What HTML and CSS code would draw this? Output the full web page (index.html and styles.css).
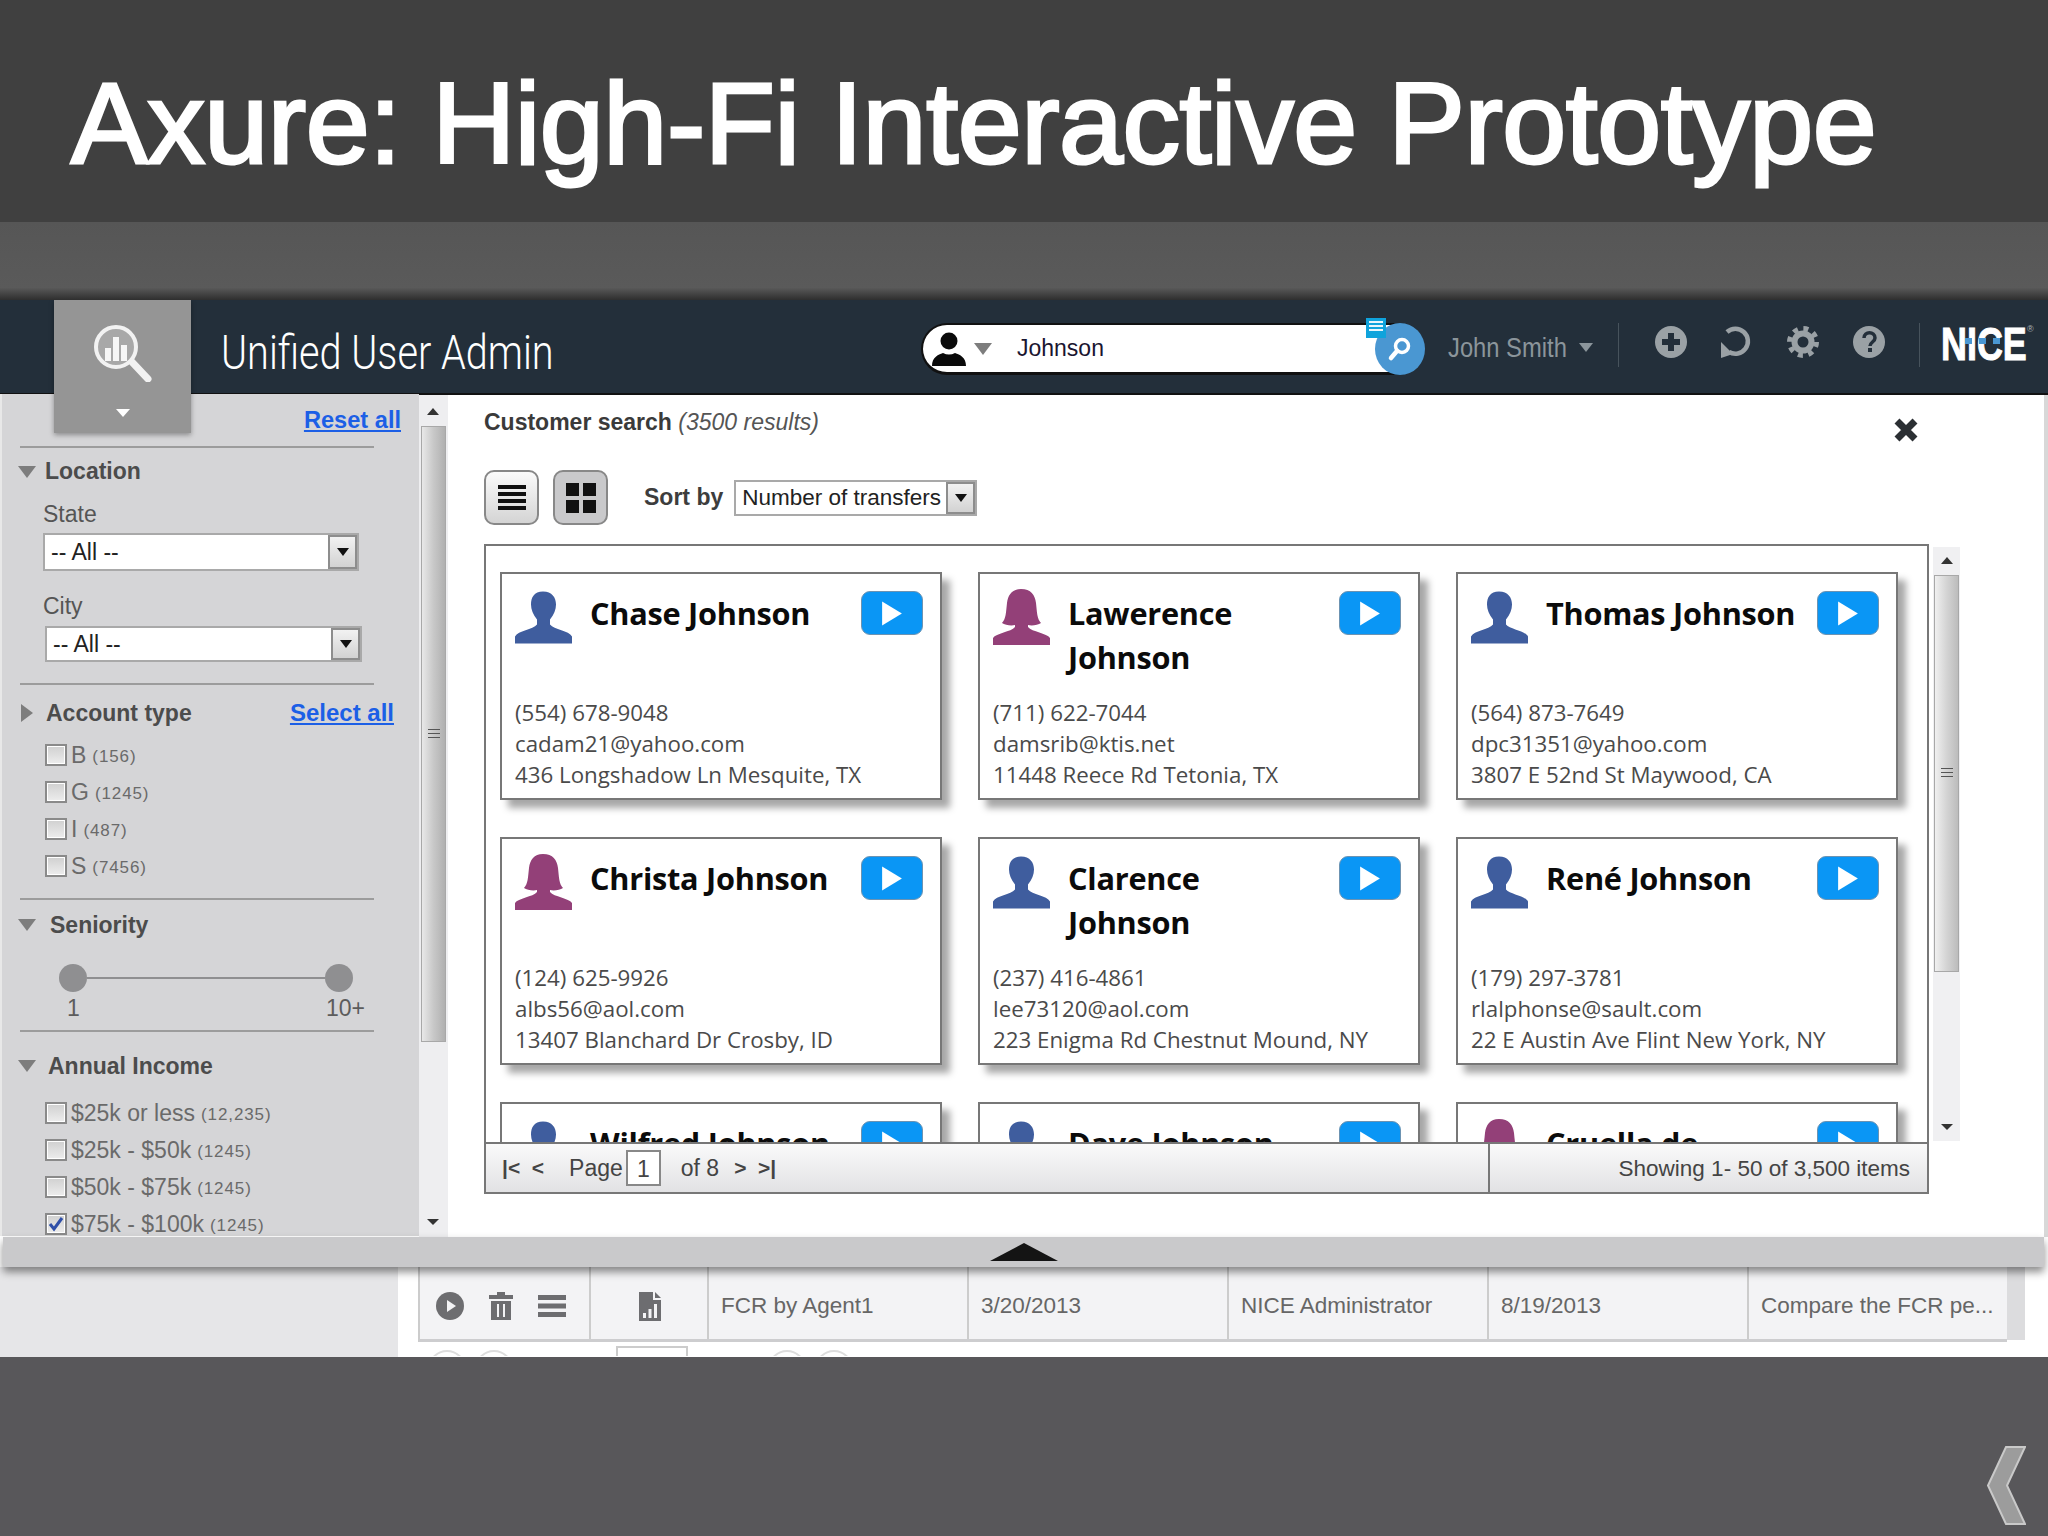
FILE: index.html
```html
<!DOCTYPE html>
<html lang="en">
<head>
<meta charset="utf-8">
<title>Axure: High-Fi Interactive Prototype</title>
<link rel="stylesheet" href="styles.css">
</head>
<body>
<svg class="defs" width="0" height="0" aria-hidden="true">
  <symbol id="male" viewBox="0 0 57 52"><path d="M28 0c-9 0-12 6-12 13 0 5 2 10 6 15v5c-4 5-19 6-22 12v7h57v-7c-3-6-18-7-22-12v-5c4-5 6-10 6-15 0-7-4-13-13-13z"/></symbol>
  <symbol id="female" viewBox="0 0 57 56"><path d="M28 0c-9 0-13 6-14 14-1 9-1 16-5 20 3 2 9 3 13 2v2c-4 5-19 6-22 11v7h57v-7c-3-5-18-6-22-11v-2c4 1 10 0 13-2-4-4-4-11-5-20-1-8-5-14-15-14z"/></symbol>
  <symbol id="play" viewBox="0 0 20 24"><path d="M1 1l18 11L1 23z"/></symbol>
</svg>
<div class="slide">
  <header class="title-band"><h1 class="title">Axure: High-Fi Interactive Prototype</h1></header>
  <div class="sub-band"></div>
  <div class="app">
    <div class="app-tab">
      <svg class="tab-icon" viewBox="0 0 58 58" width="58" height="58">
        <path d="M38 38l16 17" stroke="#f2f2f2" stroke-width="7" stroke-linecap="round"/>
        <circle cx="22" cy="23" r="20" fill="#a8a8a8" stroke="#f2f2f2" stroke-width="4"/>
        <path d="M11 24h6v13h-6zM19 13h6v24h-6zM27 21h6v16h-6z" fill="#f6f6f6"/>
      </svg>
      <span class="tab-caret"></span>
    </div>
    <div class="app-header">
      <div class="app-name">Unified User Admin</div>
      <div class="search">
        <svg class="search-person" viewBox="0 0 34 34"><circle cx="17" cy="9" r="8.5"/><path d="M0 34c0-9 6-11 11-13 4 2 8 2 12 0 5 2 11 4 11 13z"/></svg>
        <span class="tri tri-down tri-search"></span>
        <span class="search-text">Johnson</span>
        <span class="search-go">
          <svg viewBox="0 0 26 26" width="26" height="26"><circle cx="15" cy="10" r="6.5" fill="none" stroke="#fff" stroke-width="3.5"/><path d="M10 15l-6 7" stroke="#fff" stroke-width="4.5" stroke-linecap="round"/></svg>
        </span>
        <span class="note"><i></i><i></i><i></i></span>
      </div>
      <div class="user">John Smith</div>
      <span class="tri tri-down tri-user"></span>
      <span class="hdr-sep hdr-sep-a"></span>
      <div class="hdr-icons">
        <svg viewBox="0 0 32 32" width="32" height="32"><circle cx="16" cy="16" r="16" fill="#9aa1a5"/><path d="M13 7h6v6h6v6h-6v6h-6v-6H7v-6h6z" fill="#232f3a"/></svg>
        <svg viewBox="0 0 32 32" width="32" height="32"><path d="M6 6A12.5 12.5 0 1 1 8 26" fill="none" stroke="#9aa1a5" stroke-width="4.5"/><path d="M0 16l12 12-12 4z" fill="#9aa1a5"/></svg>
        <svg viewBox="0 0 32 32" width="32" height="32"><circle cx="16" cy="16" r="13.5" fill="none" stroke="#9aa1a5" stroke-width="5" stroke-dasharray="5 5.6"/><circle cx="16" cy="16" r="8.5" fill="none" stroke="#9aa1a5" stroke-width="6"/></svg>
        <svg viewBox="0 0 32 32" width="32" height="32"><circle cx="16" cy="16" r="16" fill="#9aa1a5"/><path d="M11 12c0-7 11-7 11 0 0 4-5 4-5 8" fill="none" stroke="#232f3a" stroke-width="3.5"/><rect x="15" y="22" width="4" height="4" fill="#232f3a"/></svg>
      </div>
      <span class="hdr-sep hdr-sep-b"></span>
      <div class="nice"><span class="nice-word">NICE</span><span class="nice-dots"><i></i><i></i><i></i></span><span class="nice-tm">®</span></div>
    </div>

    <div class="app-body">
      <aside class="sidebar">
        <div class="side-top"><a class="link" href="#">Reset all</a></div>
        <div class="divider"></div>
        <div class="head head-location"><span class="tri tri-down tri-head"></span><span class="head-label">Location</span></div>
        <div class="field-label">State</div>
        <div class="select select-state"><span class="select-text">-- All --</span><span class="select-btn"><span class="tri-mini"></span></span></div>
        <div class="field-label field-city">City</div>
        <div class="select select-city"><span class="select-text">-- All --</span><span class="select-btn"><span class="tri-mini"></span></span></div>
        <div class="divider divider-city"></div>
        <div class="head head-account"><span class="tri tri-right"></span><span class="head-label">Account type</span><a class="link link-select" href="#">Select all</a></div>
        <div class="checks checks-account">
          <div class="check"><span class="box"></span><span class="lbl">B</span><span class="cnt">(156)</span></div>
          <div class="check"><span class="box"></span><span class="lbl">G</span><span class="cnt">(1245)</span></div>
          <div class="check"><span class="box"></span><span class="lbl">I</span><span class="cnt">(487)</span></div>
          <div class="check"><span class="box"></span><span class="lbl">S</span><span class="cnt">(7456)</span></div>
        </div>
        <div class="divider divider-account"></div>
        <div class="head head-seniority"><span class="tri tri-down tri-head"></span><span class="head-label">Seniority</span></div>
        <div class="slider"><span class="knob"></span><span class="track"></span><span class="knob"></span></div>
        <div class="slider-labels"><span>1</span><span>10+</span></div>
        <div class="divider divider-slider"></div>
        <div class="head head-income"><span class="tri tri-down tri-head"></span><span class="head-label">Annual Income</span></div>
        <div class="checks">
          <div class="check"><span class="box"></span><span class="lbl">$25k or less</span><span class="cnt">(12,235)</span></div>
          <div class="check"><span class="box"></span><span class="lbl">$25k - $50k</span><span class="cnt">(1245)</span></div>
          <div class="check"><span class="box"></span><span class="lbl">$50k - $75k</span><span class="cnt">(1245)</span></div>
          <div class="check"><span class="box"><svg viewBox="0 0 18 18" width="18" height="18"><path d="M3 9l4 5 8-11" fill="none" stroke="#2f4fa8" stroke-width="3"/></svg></span><span class="lbl">$75k - $100k</span><span class="cnt">(1245)</span></div>
        </div>
      </aside>
      <div class="side-scroll">
        <span class="arrow-up arrow-side-up"></span>
        <span class="side-thumb"><span class="grip"></span></span>
        <span class="arrow-down arrow-side"></span>
      </div>

      <main class="main">
        <div class="main-head"><b>Customer search</b> <em>(3500 results)</em></div>
        <svg class="close" viewBox="0 0 26 26" width="26" height="26"><path d="M4 4l18 18M22 4L4 22" stroke="#2b2f33" stroke-width="7"/></svg>
        <div class="toolbar">
          <span class="toggle"><span class="bars"><i></i><i></i><i></i><i></i></span></span>
          <span class="toggle toggle-on"><span class="squares"><i></i><i></i><i></i><i></i></span></span>
          <b class="sort-label">Sort by</b>
          <div class="select select-sort"><span class="select-text">Number of transfers</span><span class="select-btn"><span class="tri-mini"></span></span></div>
        </div>
        <div class="results-row">
          <section class="results">
            <div class="cards">
              <article class="card"><div class="card-top"><svg class="avatar male"><use href="#male"/></svg><h2 class="name">Chase Johnson</h2><span class="go"><svg><use href="#play"/></svg></span></div><div class="info">(554) 678-9048<br>cadam21@yahoo.com<br>436 Longshadow Ln Mesquite, TX</div></article>
              <article class="card"><div class="card-top"><svg class="avatar female"><use href="#female"/></svg><h2 class="name">Lawerence<br>Johnson</h2><span class="go"><svg><use href="#play"/></svg></span></div><div class="info">(711) 622-7044<br>damsrib@ktis.net<br>11448 Reece Rd Tetonia, TX</div></article>
              <article class="card"><div class="card-top"><svg class="avatar male"><use href="#male"/></svg><h2 class="name">Thomas Johnson</h2><span class="go"><svg><use href="#play"/></svg></span></div><div class="info">(564) 873-7649<br>dpc31351@yahoo.com<br>3807 E 52nd St Maywood, CA</div></article>
              <article class="card"><div class="card-top"><svg class="avatar female"><use href="#female"/></svg><h2 class="name">Christa Johnson</h2><span class="go"><svg><use href="#play"/></svg></span></div><div class="info">(124) 625-9926<br>albs56@aol.com<br>13407 Blanchard Dr Crosby, ID</div></article>
              <article class="card"><div class="card-top"><svg class="avatar male"><use href="#male"/></svg><h2 class="name">Clarence<br>Johnson</h2><span class="go"><svg><use href="#play"/></svg></span></div><div class="info">(237) 416-4861<br>lee73120@aol.com<br>223 Enigma Rd Chestnut Mound, NY</div></article>
              <article class="card"><div class="card-top"><svg class="avatar male"><use href="#male"/></svg><h2 class="name">René Johnson</h2><span class="go"><svg><use href="#play"/></svg></span></div><div class="info">(179) 297-3781<br>rlalphonse@sault.com<br>22 E Austin Ave Flint New York, NY</div></article>
              <article class="card"><div class="card-top"><svg class="avatar male"><use href="#male"/></svg><h2 class="name">Wilfred Johnson</h2><span class="go"><svg><use href="#play"/></svg></span></div></article>
              <article class="card"><div class="card-top"><svg class="avatar male"><use href="#male"/></svg><h2 class="name">Dave Johnson</h2><span class="go"><svg><use href="#play"/></svg></span></div></article>
              <article class="card"><div class="card-top"><svg class="avatar female"><use href="#female"/></svg><h2 class="name">Cruella de</h2><span class="go"><svg><use href="#play"/></svg></span></div></article>
            </div>
            <footer class="pager">
              <div class="pager-left"><span class="pg-nav">|&lt;&nbsp; &lt;</span><span class="pg-page">Page</span><span class="pg-input">1</span><span class="pg-of">of 8</span><span class="pg-nav">&gt;&nbsp; &gt;|</span></div>
              <div class="pager-right">Showing 1- 50 of 3,500 items</div>
            </footer>
          </section>
          <div class="result-scroll">
            <span class="arrow-up"></span>
            <span class="result-thumb"><span class="grip"></span></span>
            <span class="arrow-down"></span>
          </div>
        </div>
      </main>
    </div>

    <div class="handle"><span class="handle-tri"></span></div>

    <div class="lower">
      <div class="lower-side"></div>
      <div class="lower-table">
        <div class="t-row">
          <div class="t-cell t-actions">
            <svg viewBox="0 0 28 28" width="28" height="28"><circle cx="14" cy="14" r="14" fill="#6d6d70"/><path d="M11 8l9 6-9 6z" fill="#f3f3f5"/></svg>
            <svg viewBox="0 0 24 28" width="24" height="28"><path d="M8 0h8v3h8v4H0V3h8zM2 9h20v19H2z" fill="#6d6d70"/><path d="M8 12h2v13H8zM14 12h2v13h-2z" fill="#f3f3f5"/></svg>
            <svg viewBox="0 0 28 24" width="28" height="24"><path d="M0 1h28v5H0zM0 9.5h28v5H0zM0 18h28v5H0z" fill="#6d6d70"/></svg>
          </div>
          <div class="t-cell t-doc"><svg viewBox="0 0 22 29" width="22" height="29"><path d="M0 0h14v8h8v21H0z" fill="#6d6d70"/><path d="M16 0l6 6h-6z" fill="#6d6d70"/><path d="M4 21h3v5H4zM9.5 17h3v9h-3zM15 12h3v14h-3z" fill="#f3f3f5"/></svg></div>
          <div class="t-cell t-a">FCR by Agent1</div>
          <div class="t-cell t-a">3/20/2013</div>
          <div class="t-cell t-a">NICE Administrator</div>
          <div class="t-cell t-a">8/19/2013</div>
          <div class="t-cell t-last">Compare the FCR pe...</div>
        </div>
        <div class="t-pager"><span class="circ"></span><span class="circ"></span><span class="pg-box"></span><span class="circ circ-far"></span><span class="circ"></span></div>
      </div>
      <div class="lower-scroll"></div>
    </div>
  </div>
  <svg class="chevron" viewBox="0 0 39 79" width="39" height="79"><path d="M38 1H19L1 39.5 19 78h19L20 39.5z" fill="#9c9c9c" stroke="#c9c9c9" stroke-width="2"/></svg>
</div>
</body>
</html>
```

FILE: styles.css
```css
* { box-sizing: border-box; }
html, body { margin: 0; padding: 0; }
body { font-family: "Liberation Sans", Arial, sans-serif; background: #58575a; }
.defs { position: absolute; }
.slide { position: relative; width: 2048px; height: 1536px; overflow: hidden; background: #58575a; display: flex; flex-direction: column; }

.title-band { height: 222px; background: #404040; padding-left: 71px; }
.title { margin: 0; padding-top: 56px; font-size: 115px; line-height: 134px; font-weight: 400; color: #fff; -webkit-text-stroke: 3px #fff; letter-spacing: -.45px; white-space: nowrap; }
.sub-band { height: 78px; background: linear-gradient(#565656 0, #5a5a5a 84%, #2e2e2e 100%); }

.app { position: relative; height: 1057px; overflow: hidden; display: flex; flex-direction: column; background: #fff; }

.app-tab { position: absolute; z-index: 3; left: 54px; top: 0; width: 137px; height: 133px; background: #959595; box-shadow: 0 2px 5px rgba(0,0,0,.35); display: flex; flex-direction: column; align-items: center; padding-top: 24px; }
.tab-icon { margin-left: 1px; }
.tab-caret { width: 0; height: 0; margin-top: 27px; border-style: solid; border-width: 8px 7px 0; border-color: #fff transparent transparent; }

.app-header { height: 95px; flex: none; background: #232f3a; border-bottom: 2px solid #111; display: flex; align-items: center; padding: 0 0 2px 221px; }
.app-name { width: 700px; margin-top: 13px; font-family: Roboto, sans-serif; font-weight: 300; font-size: 48px; color: #fff; transform: scaleX(.826); transform-origin: left center; white-space: nowrap; }

.search { position: relative; width: 503px; height: 52px; flex: none; background: #fff; border: 2px solid #111; border-bottom-width: 3px; border-radius: 26px; display: flex; align-items: center; padding-left: 9px; margin-top: 7px; }
.search-person { width: 34px; height: 34px; fill: #0a0a0a; }
.tri { display: inline-block; width: 0; height: 0; border-style: solid; }
.tri-down { border-width: 12px 9px 0; border-color: #7d7d7d transparent transparent; }
.tri-search { margin-left: 8px; }
.search-text { margin-left: 25px; font-size: 23px; color: #1a1530; }
.search-go { position: absolute; right: -3px; top: -2px; width: 50px; height: 52px; border-radius: 50%; background: #4a97d2; display: flex; align-items: center; justify-content: center; }
.note { position: absolute; z-index: 2; right: 36px; top: -7px; width: 20px; height: 20px; background: #0fa3dc; display: flex; flex-direction: column; gap: 2px; padding: 3px 3px; }
.note i { display: block; height: 2px; background: #e8f6fc; }

.user { width: 131px; margin-left: 24px; font-size: 27px; color: #8b959b; margin-top: 6px; white-space: nowrap; transform: scaleX(.88); transform-origin: left center; flex: none; }
.tri-user { border-width: 9px 7px 0; border-color: #8b959b transparent transparent; margin-top: 4px; }
.hdr-sep { width: 1px; height: 44px; background: #47535c; flex: none; margin-top: -1px; }
.hdr-sep-a { margin-left: 25px; }
.hdr-icons { display: flex; gap: 34px; margin-left: 36px; margin-top: -8px; }
.hdr-sep-b { margin-left: 34px; }
.nice { position: relative; margin-left: 21px; margin-top: -3px; height: 40px; width: 92px; flex: none; }
.nice-word { display: block; font-size: 46px; line-height: 40px; font-weight: 700; color: #fff; -webkit-text-stroke: 1px #fff; transform: scaleX(.78); transform-origin: left center; }
.nice-dots { position: absolute; left: 24px; top: 14px; display: flex; gap: 7px; }
.nice-dots i { width: 7px; height: 6px; background: #4a97d2; }
.nice-tm { position: absolute; left: 86px; top: 0; font-size: 9px; color: #aeb4b8; }

.app-body { height: 842px; flex: none; display: flex; }
.sidebar { width: 419px; flex: none; height: 842px; overflow: hidden; background: #d5d5d7; color: #484848; border-left: 2px solid #e8e8e8; margin-top: -1px; padding-top: 1px; }
.side-top { height: 51px; display: flex; align-items: center; justify-content: flex-end; padding-right: 18px; }
.link { color: #1c5fe6; font-size: 23.6px; font-weight: 700; text-decoration: underline; }
.divider { width: 354px; height: 2px; margin-left: 18px; background: #9c9c9c; }
.divider-city { margin-top: 21px; }
.divider-account { margin-top: 21px; }
.divider-slider { margin-top: 10px; }

.head { display: flex; align-items: center; padding-left: 16px; font-size: 23px; font-weight: 700; color: #4c4c4c; }
.head-location { height: 47px; }
.head-account { height: 57px; padding-left: 19px; padding-right: 25px; padding-bottom: 1px; }
.head-seniority { height: 48px; padding-top: 2px; }
.head-income { height: 69px; padding-bottom: 1px; }
.tri-head { margin-right: 9px; }
.tri-right { border-width: 9px 0 9px 12px; border-color: transparent transparent transparent #7d7d7d; margin-right: 13px; }
.head-seniority .tri-head { margin-right: 14px; }
.head-income .tri-head { margin-right: 12px; }
.link-select { margin-left: auto; font-size: 24px; }

.field-label { height: 38px; line-height: 38px; padding-left: 41px; font-size: 23px; color: #555; }
.field-city { height: 55px; line-height: 39px; padding-top: 16px; }
.select { display: flex; background: #fff; border: 2px solid #a9a9a9; overflow: hidden; }
.select-text { flex: 1; min-width: 0; overflow: hidden; white-space: nowrap; font-size: 23px; padding-left: 6px; color: #222; align-self: center; }
.select-btn { width: 29px; flex: none; display: flex; align-items: center; justify-content: center; background: linear-gradient(#f2f2f2, #d2d2d2); border: 2px solid #8d8d8d; }
.tri-mini { width: 0; height: 0; border-style: solid; border-width: 8px 6px 0; border-color: #111 transparent transparent; }
.select-state { width: 316px; height: 38px; margin-left: 41px; }
.select-city { width: 317px; height: 36px; margin-left: 43px; }
.select-sort { width: 243px; height: 36px; margin-left: 11px; }
.select-sort .select-text { font-size: 22.5px; }

.checks { display: flex; flex-direction: column; gap: 15px; margin-left: 43px; margin-top: 1px; }
.checks-account { margin-top: 2px; }
.check { height: 22px; display: flex; align-items: center; white-space: nowrap; color: #6a6a6a; }
.box { width: 22px; height: 22px; flex: none; display: flex; align-items: center; justify-content: center; border: 2px solid #8a8a8a; background: linear-gradient(#d0d0d0, #ededed); box-shadow: inset 0 0 0 1px #fff; }
.lbl { margin-left: 4px; font-size: 23px; }
.cnt { margin-left: 6px; font-size: 17px; letter-spacing: .9px; margin-top: 3px; }

.slider { height: 48px; display: flex; align-items: center; padding: 11px 0 0 57px; }
.knob { width: 28px; height: 28px; flex: none; border-radius: 50%; background: #8f8f91; }
.track { width: 238px; height: 2px; background: #8f8f91; }
.slider-labels { width: 298px; height: 24px; margin-left: 65px; display: flex; justify-content: space-between; font-size: 23px; line-height: 24px; color: #5c5c5c; }

.side-scroll { position: relative; width: 29px; flex: none; background: #eeeef0; }
.arrow-up, .arrow-down { position: absolute; left: 8px; width: 0; height: 0; border-style: solid; }
.arrow-up { top: 10px; border-width: 0 6px 7px; border-color: transparent transparent #333; }
.arrow-side-up { top: 13px; }
.arrow-down { bottom: 11px; border-width: 6px 6px 0; border-color: #333 transparent transparent; }
.arrow-side { bottom: 12px; }
.side-thumb { position: absolute; left: 2px; top: 31px; width: 25px; height: 616px; display: flex; align-items: center; justify-content: center; background: linear-gradient(90deg, #e8e8e8, #c8c8c8 50%, #b0b0b0); border: 1px solid #a8a8a8; }
.grip { display: block; width: 12px; height: 11px; background: repeating-linear-gradient(#555 0 1px, transparent 1px 4px); }

.main { position: relative; flex: 1; min-width: 0; padding-left: 36px; border-right: 4px solid #d8d8d8; background: #fff; }
.main-head { height: 56px; line-height: 54px; font-size: 23px; color: #3a3a3a; white-space: nowrap; }
.main-head em { color: #555; }
.close { position: absolute; left: 1445px; top: 22px; }
.toolbar { margin-top: 19px; height: 55px; display: flex; align-items: center; }
.toggle { width: 55px; height: 55px; display: flex; align-items: center; justify-content: center; border: 2px solid #888; border-radius: 10px; background: linear-gradient(#fbfbfb, #d4d4d4); margin-right: 14px; }
.toggle-on { background: #c9c9cb; margin-right: 36px; }
.bars { width: 28px; display: flex; flex-direction: column; gap: 3px; }
.bars i { height: 4px; background: #111; }
.squares { width: 30px; display: grid; grid-template-columns: 13px 13px; gap: 4px; }
.squares i { height: 13px; background: #111; }
.sort-label { font-size: 23px; color: #3d3d3d; white-space: nowrap; }

.results-row { margin-top: 19px; display: flex; gap: 4px; align-items: flex-start; }
.results { width: 1445px; height: 650px; flex: none; border: 2px solid #777; display: flex; flex-direction: column; }
.cards { height: 596px; flex: none; overflow: hidden; padding: 26px 0 0 14px; display: grid; grid-template-columns: repeat(3, 442px); grid-auto-rows: 228px; column-gap: 36px; row-gap: 37px; }
.card { display: flex; flex-direction: column; height: 228px; padding: 17px 17px 8px 13px; background: #fff; border: 2px solid #777; box-shadow: 8px 8px 7px rgba(0,0,0,.35); }
.card-top { display: flex; align-items: flex-start; }
.avatar { width: 57px; height: 53px; flex: none; }
.male { fill: #3f5d9e; }
.female { fill: #934078; height: 56px; margin-top: -2px; }
.name { flex: 1; min-width: 0; margin: 0 0 0 18px; font-family: "Open Sans", sans-serif; font-weight: 700; font-size: 30.7px; line-height: 44px; color: #0b0b0b; letter-spacing: -.25px; white-space: nowrap; }
.go { width: 62px; height: 44px; flex: none; display: flex; align-items: center; justify-content: center; background: #0a96f5; border: 1px solid #6c93b2; border-radius: 9px; fill: #fff; }
.go svg { width: 22px; height: 27px; }
.info { margin-top: auto; font-family: "Open Sans", sans-serif; font-size: 22.3px; line-height: 31px; color: #4a4a4a; white-space: nowrap; }

.pager { height: 50px; flex: none; display: flex; background: linear-gradient(#fafafa, #e2e2e4); border-top: 2px solid #777; font-size: 23px; color: #444; }
.pager-left { width: 1004px; display: flex; align-items: center; padding-left: 16px; border-right: 2px solid #777; white-space: nowrap; }
.pg-nav { font-weight: 700; font-size: 21px; }
.pg-page { margin-left: 25px; }
.pg-input { width: 35px; height: 36px; margin-left: 3px; border: 2px solid #888; background: #fff; text-align: center; line-height: 34px; }
.pg-of { margin: 0 15px 0 20px; }
.pager-right { flex: 1; text-align: right; padding-right: 17px; line-height: 50px; font-size: 22.5px; white-space: nowrap; }

.result-scroll { position: relative; width: 27px; height: 594px; margin-top: 3px; flex: none; background: #f0f0f2; }
.result-thumb { position: absolute; left: 1px; top: 28px; width: 25px; height: 397px; display: flex; align-items: center; justify-content: center; background: linear-gradient(90deg, #f0f0f0, #d4d4d4 50%, #bcbcbc); border: 1px solid #a8a8a8; }

.handle { position: relative; z-index: 2; height: 30px; flex: none; margin: 0 4px 0 3px; display: flex; justify-content: center; align-items: center; background: #c9c9cb; box-shadow: 0 5px 8px rgba(0,0,0,.45); }
.handle-tri { width: 0; height: 0; border-style: solid; border-width: 0 34px 18px; border-color: transparent transparent #141414; margin-top: -1px; }

.lower { flex: 1; min-height: 0; display: flex; background: #fff; }
.lower-side { width: 398px; flex: none; background: #e6e6e8; margin-right: 20px; }
.lower-table { width: 1589px; flex: none; overflow: hidden; }
.t-row { height: 75px; display: flex; background: #f3f3f5; border-left: 2px solid #ccc; border-bottom: 3px solid #cdcdcf; font-size: 22.5px; color: #666; }
.t-cell { display: flex; align-items: center; border-right: 2px solid #ccc; white-space: nowrap; flex: none; padding: 6px 0 0 12px; }
.t-actions { width: 171px; padding-left: 16px; gap: 25px; }
.t-doc { width: 118px; padding-left: 48px; }
.t-a { width: 260px; }
.t-last { width: 260px; border-right: 0; }
.t-pager { height: 14px; display: flex; align-items: flex-start; padding: 8px 0 0 10px; overflow: hidden; }
.circ { width: 38px; height: 38px; flex: none; border: 2px solid #ddd; border-radius: 50%; margin-right: 9px; }
.pg-box { width: 72px; height: 30px; flex: none; margin: -4px 0 0 94px; border: 2px solid #ccc; }
.circ-far { margin-left: 80px; }
.lower-scroll { width: 18px; flex: none; background: #dcdcde; height: 73px; }

.chevron { position: absolute; left: 1987px; top: 1446px; }
```
